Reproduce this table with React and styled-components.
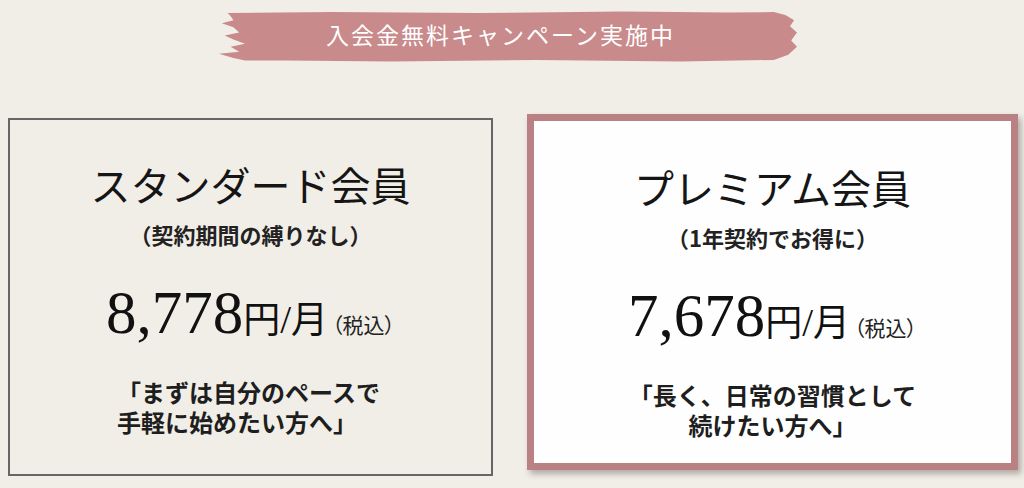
import React from "react";
import styled, { createGlobalStyle } from "styled-components";

const Global = createGlobalStyle`
  html, body { margin: 0; padding: 0; }
  body {
    background: #f1eee7;
    font-family: "Noto Sans CJK JP", "Noto Sans", sans-serif;
    color: #1c1c1c;
  }
`;

const Page = styled.div`
  width: 1024px;
  height: 488px;
  display: flex;
  flex-direction: column;
  overflow: hidden;
`;

const BannerRow = styled.div`
  padding: 11px 0 0 216px;
`;

const Banner = styled.div`
  width: 581px;
  height: 51px;
  box-sizing: border-box;
  padding: 0 12px 6px 0;
  display: flex;
  align-items: center;
  justify-content: center;
  background: #c98a8c;
  color: #ffffff;
  font-size: 23px;
  font-weight: 400;
  letter-spacing: 2px;
  clip-path: polygon(
    2% 4%, 20% 2%, 45% 4%, 70% 1%, 88% 3%, 96% 2%, 98% 8%, 99.5% 18%,
    98.8% 30%, 100% 42%, 99% 58%, 100% 70%, 98.5% 86%, 96% 96%, 80% 99%,
    55% 96%, 30% 99%, 12% 97%, 5% 97%, 3% 92%, 0.5% 84%, 4% 80%, 2.5% 70%,
    5% 64%, 3% 56%, 1.5% 48%, 4% 42%, 3% 32%, 1% 24%, 3% 18%, 2.5% 10%
  );
`;

const CardsRow = styled.div`
  display: flex;
  align-items: flex-start;
  gap: 34px;
  padding: 52px 0 0 8px;
`;

const Card = styled.div`
  box-sizing: border-box;
  width: ${(p) => (p.$premium ? 491 : 485)}px;
  height: ${(p) => (p.$premium ? 356 : 358)}px;
  margin-top: ${(p) => (p.$premium ? 0 : 4)}px;
  border: ${(p) => (p.$premium ? "7px solid #b98183" : "2px solid #666666")};
  background: ${(p) => (p.$premium ? "#fefefe" : "transparent")};
  box-shadow: ${(p) =>
    p.$premium ? "3px 4px 6px rgba(60, 40, 40, 0.35)" : "none"};
  display: flex;
  flex-direction: column;
  align-items: center;
  padding-top: ${(p) => (p.$premium ? 42 : 40)}px;
`;

const Title = styled.div`
  font-size: 40px;
  line-height: 48px;
  font-weight: 400;
  color: #151515;
`;

const Sub = styled.div`
  margin-top: 11px;
  font-size: 22px;
  line-height: 30px;
  font-weight: 700;
  color: #222;
`;

const PriceRow = styled.div`
  margin-top: 32px;
  display: flex;
  align-items: baseline;
  line-height: 64px;
  color: #111;
`;

const Amount = styled.span`
  font-family: "Liberation Serif", "DejaVu Serif", serif;
  font-size: 61px;
`;

const Unit = styled.span`
  font-family: "Noto Sans CJK JP", sans-serif;
  font-size: 37px;
  font-weight: 400;
`;

const Slash = styled.span`
  font-family: "Liberation Serif", serif;
  font-size: 39px;
`;

const Tax = styled.span`
  margin-left: 4px;
  font-size: 21px;
  font-weight: 400;
  font-feature-settings: "palt";
  color: #222;
`;

const Desc = styled.div`
  margin-top: 21px;
  display: flex;
  flex-direction: column;
  align-items: ${(p) => (p.$left ? "flex-start" : "center")};
  margin-left: ${(p) => (p.$left ? "-4px" : "0")};
`;

const DescLine = styled.div`
  font-size: 24px;
  line-height: 30px;
  font-weight: 700;
  color: #1e1e1e;
  white-space: nowrap;
`;

function Plan({ premium, title, sub, price, lines }) {
  return (
    <Card $premium={premium}>
      <Title>{title}</Title>
      <Sub>{sub}</Sub>
      <PriceRow>
        <Amount>{price}</Amount>
        <Unit>円</Unit>
        <Slash>/</Slash>
        <Unit>月</Unit>
        <Tax>（税込）</Tax>
      </PriceRow>
      <Desc $left={!premium}>
        {lines.map((l) => (
          <DescLine key={l}>{l}</DescLine>
        ))}
      </Desc>
    </Card>
  );
}

export default function App() {
  return (
    <Page>
      <Global />
      <BannerRow>
        <Banner>入会金無料キャンペーン実施中</Banner>
      </BannerRow>
      <CardsRow>
        <Plan
          title="スタンダード会員"
          sub="（契約期間の縛りなし）"
          price="8,778"
          lines={["「まずは自分のペースで", "手軽に始めたい方へ」"]}
        />
        <Plan
          premium
          title="プレミアム会員"
          sub="（1年契約でお得に）"
          price="7,678"
          lines={["「長く、日常の習慣として", "続けたい方へ」"]}
        />
      </CardsRow>
    </Page>
  );
}
